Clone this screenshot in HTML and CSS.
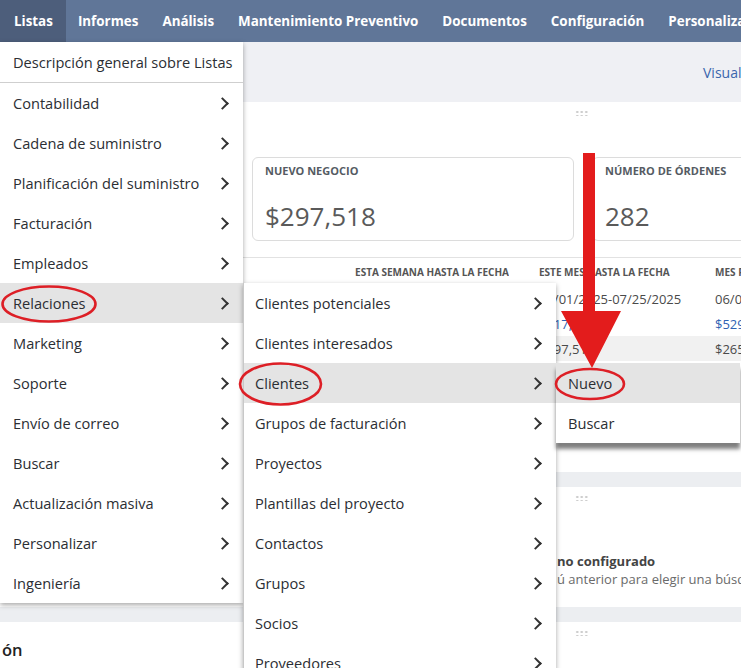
FILE: index.html
```html
<!DOCTYPE html>
<html lang="es">
<head>
<meta charset="utf-8">
<title>Listas</title>
<link rel="stylesheet" href="styles.css">
</head>
<body>
<nav class="topnav">
  <span class="nav-item active">Listas</span>
  <span class="nav-item">Informes</span>
  <span class="nav-item">Análisis</span>
  <span class="nav-item">Mantenimiento Preventivo</span>
  <span class="nav-item">Documentos</span>
  <span class="nav-item">Configuración</span>
  <span class="nav-item">Personalización</span>
</nav>

<div class="page">
  <div class="pagehead"><span class="visual">Visualizar</span></div>

  <section class="portlet p1">
    <div class="handle-row"><span class="handle"></span></div>
    <div class="cards">
      <div class="card c1">
        <div class="card-label">NUEVO NEGOCIO</div>
        <div class="card-value">$297,518</div>
      </div>
      <div class="card c2">
        <div class="card-label">NÚMERO DE ÓRDENES</div>
        <div class="card-value">282</div>
      </div>
    </div>
    <div class="table">
      <div class="trow thead">
        <span class="cell c-a">ESTA SEMANA HASTA LA FECHA</span>
        <span class="cell c-b">ESTE MES HASTA LA FECHA</span>
        <span class="cell c-c">MES PASADO</span>
      </div>
      <div class="trow">
        <span class="cell c-a"></span>
        <span class="cell c-b">07/01/2025-07/25/2025</span>
        <span class="cell c-c">06/01/2025-06/30/2025</span>
      </div>
      <div class="trow link">
        <span class="cell c-a"></span>
        <span class="cell c-b">$517,340</span>
        <span class="cell c-c">$529,118</span>
      </div>
      <div class="trow alt">
        <span class="cell c-a"></span>
        <span class="cell c-b">$297,518</span>
        <span class="cell c-c">$265,402</span>
      </div>
      <div class="trow link">
        <span class="cell c-a"></span>
        <span class="cell c-b"></span>
        <span class="cell c-c">$61</span>
      </div>
      <div class="trow link">
        <span class="cell c-a"></span>
        <span class="cell c-b"></span>
        <span class="cell c-c">$24</span>
      </div>
      <div class="trow link">
        <span class="cell c-a"></span>
        <span class="cell c-b"></span>
        <span class="cell c-c">$36</span>
      </div>
    </div>
  </section>

  <div class="band"></div>

  <section class="portlet p2">
    <div class="handle-row"><span class="handle"></span></div>
    <div class="msg">
      <div class="msg-title">no configurado</div>
      <div class="msg-text">ú anterior para elegir una búsqueda guardada</div>
    </div>
  </section>

  <div class="band"></div>

  <section class="portlet p3">
    <div class="handle-row"><span class="handle"></span></div>
    <div class="p3-title">ón</div>
  </section>
</div>

<ul class="menu menu1">
  <li class="mi first">Descripción general sobre Listas</li>
  <li class="mi sub">Contabilidad</li>
  <li class="mi sub">Cadena de suministro</li>
  <li class="mi sub">Planificación del suministro</li>
  <li class="mi sub">Facturación</li>
  <li class="mi sub">Empleados</li>
  <li class="mi sub hl">Relaciones</li>
  <li class="mi sub">Marketing</li>
  <li class="mi sub">Soporte</li>
  <li class="mi sub">Envío de correo</li>
  <li class="mi sub">Buscar</li>
  <li class="mi sub">Actualización masiva</li>
  <li class="mi sub">Personalizar</li>
  <li class="mi sub">Ingeniería</li>
</ul>

<ul class="menu menu2">
  <li class="mi sub">Clientes potenciales</li>
  <li class="mi sub">Clientes interesados</li>
  <li class="mi sub hl">Clientes</li>
  <li class="mi sub">Grupos de facturación</li>
  <li class="mi sub">Proyectos</li>
  <li class="mi sub">Plantillas del proyecto</li>
  <li class="mi sub">Contactos</li>
  <li class="mi sub">Grupos</li>
  <li class="mi sub">Socios</li>
  <li class="mi sub">Proveedores</li>
</ul>

<ul class="menu menu3">
  <li class="mi hl">Nuevo</li>
  <li class="mi">Buscar</li>
</ul>

<svg class="annot" width="741" height="668" viewBox="0 0 741 668" aria-hidden="true">
  <ellipse cx="49" cy="304" rx="46.5" ry="17.5" fill="none" stroke="#dd1f26" stroke-width="2.6"/>
  <ellipse cx="280.5" cy="384" rx="40.5" ry="20.5" fill="none" stroke="#dd1f26" stroke-width="2.6"/>
  <ellipse cx="590" cy="384" rx="34" ry="15" fill="none" stroke="#dd1f26" stroke-width="2.6"/>
  <polygon points="583,153 595,153 595,311 621,311 592,368 561,311 583,311" fill="#e31c1c"/>
</svg>
</body>
</html>
```
FILE: styles.css
```css
* { box-sizing: border-box; }
html, body { margin: 0; padding: 0; }
body {
  width: 741px;
  height: 668px;
  overflow: hidden;
  position: relative;
  font-family: "Open Sans", "DejaVu Sans", sans-serif;
  font-size: 14px;
  color: #2d2d2d;
  background: #fff;
}

.topnav {
  display: flex;
  height: 42px;
  background: #607698;
  white-space: nowrap;
}
.nav-item {
  flex: none;
  padding: 0 12px;
  line-height: 42px;
  color: #fff;
  font-weight: 700;
  font-size: 13.4px;
}
.nav-item.active { background: #4d5e7b; padding: 0 13px 0 14px; }

.page { display: flex; flex-direction: column; }

.pagehead {
  height: 60px;
  background: #eff0f4;
  display: flex;
  align-items: center;
  padding-left: 703px;
  white-space: nowrap;
  overflow: hidden;
}
.visual { color: #3a66ad; font-size: 14px; }

.handle-row { display: flex; padding-left: 575px; }
.handle {
  width: 13px;
  height: 6px;
  background-image: radial-gradient(circle, #c9c9c9 0.9px, transparent 1.3px);
  background-size: 4.5px 4px;
}

.p1 { padding-top: 8px; padding-bottom: 36px; }
.cards {
  display: flex;
  gap: 18px;
  padding-left: 252px;
  margin-top: 41px;
}
.card {
  flex: none;
  height: 84px;
  border: 1px solid #dcdcdc;
  border-radius: 6px;
  padding: 5px 12px 0 12px;
}
.c1 { width: 322px; }
.c2 { flex: 1; border-top-right-radius: 0; border-bottom-right-radius: 0; border-right: none; }
.card-label {
  font-size: 11px;
  font-weight: 700;
  color: #555b63;
  line-height: 15px;
}
.card-value {
  margin-top: 20px;
  font-size: 26px;
  color: #5a5a5a;
  line-height: 36px;
}

.table {
  margin-top: 16px;
  border-top: 1px solid #e2e2e2;
  padding-left: 243px;
}
.trow {
  display: flex;
  height: 25px;
  align-items: center;
  white-space: nowrap;
  font-size: 13px;
  color: #4a4a4a;
}
.trow.thead {
  height: 28px;
  font-size: 10px;
  font-weight: 700;
  color: #555;
}
.cell { flex: none; overflow: hidden; }
.c-a { width: 266px; text-align: right; }
.c-b { width: 176px; margin-left: 30px; }
.c-c { width: 120px; }
.trow.link { color: #2f62b3; }
.trow.alt { background: #f1f1f1; }

.band { height: 15px; background: #eceef1; }

.p2 { height: 120px; padding-top: 8px; }
.msg { padding-left: 557px; margin-top: 51px; white-space: nowrap; }
.msg-title { font-weight: 700; color: #444; font-size: 13px; line-height: 18px; }
.msg-text { color: #6a6a6a; font-size: 13px; line-height: 18px; }

.p3 { padding-top: 8px; }
.p3-title { padding-left: 2px; margin-top: 3px; font-size: 16.5px; font-weight: 600; color: #222; line-height: 22px; }

.menu {
  position: absolute;
  margin: 0;
  padding: 0;
  list-style: none;
  background: #fff;
  box-shadow: 0 2px 5px rgba(0,0,0,0.35);
  z-index: 5;
}
.menu1 { top: 42px; left: 0; width: 243px; }
.menu2 { top: 283px; left: 243px; width: 313px; z-index: 6; border-left: 1px solid #c8c8c8; }
.menu3 { top: 363px; left: 556px; width: 184px; z-index: 7; box-shadow: 0 6px 4px rgba(0,0,0,0.5); }

.mi {
  height: 40px;
  display: flex;
  align-items: center;
  padding-left: 13px;
  padding-right: 13px;
  font-size: 14.6px;
  color: #2b2e33;
  white-space: nowrap;
}
.menu2 .mi { padding-left: 11px; }
.menu3 .mi { padding-left: 12px; }
.mi.first { height: 41px; border-bottom: 1px solid #cfcfcf; }
.mi.hl { background: #e4e4e4; }
.mi.sub::after {
  content: "";
  margin-left: auto;
  width: 7px;
  height: 7px;
  border-right: 2px solid #333;
  border-top: 2px solid #333;
  transform: rotate(45deg);
  margin-right: 3px;
}

.annot {
  position: absolute;
  left: 0;
  top: 0;
  z-index: 10;
  pointer-events: none;
}
```
